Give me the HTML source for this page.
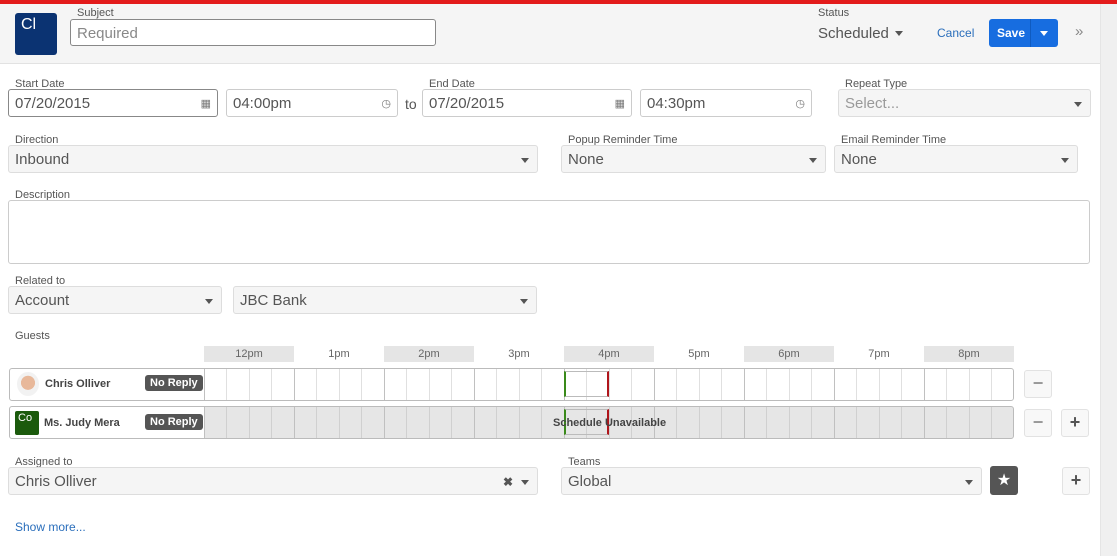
<!DOCTYPE html><html><head><style>
*{box-sizing:border-box}
body{margin:0;width:1117px;height:556px;overflow:hidden;background:#fff;font-family:"Liberation Sans",Arial,sans-serif;color:#555;position:relative}
.a{position:absolute}
.lbl{position:absolute;font-size:11px;color:#555;margin-top:1px}
.in{position:absolute;height:28px;border:1px solid #ccc;border-radius:3px;background:#fff;font-size:15px;color:#555;padding:6px 6px 0;line-height:16px}
.sel{position:absolute;height:28px;border:1px solid #ddd;border-radius:3px;background:#f5f5f5;font-size:15px;color:#555;padding:6px 6px 0;line-height:16px}
.car{position:absolute;right:8px;top:12px;width:0;height:0;border-left:4px solid transparent;border-right:4px solid transparent;border-top:5px solid #555}
.hr{position:absolute;top:346px;width:90px;height:16px;font-size:11px;text-align:center;line-height:16px;color:#666}
.btn{position:absolute;width:28px;height:28px;border:1px solid #e2e2e2;border-radius:3px;background:#f8f8f8;text-align:center;color:#999;font-size:18px;line-height:24px;font-weight:bold}
.nr{position:absolute;background:#555;color:#fff;font-size:11px;font-weight:bold;border-radius:3px;padding:2px 5px}
</style></head><body>
<div class="a" style="left:0;top:0;width:1117px;height:4px;background:#e31b1b"></div>
<div class="a" style="left:0;top:4px;width:1100px;height:60px;background:#f5f5f5;border-bottom:1px solid #e2e2e2"></div>
<div class="a" style="left:1100px;top:4px;width:17px;height:552px;background:#f0f0f0;border-left:1px solid #e5e5e5"></div>
<div class="a" style="left:15px;top:13px;width:42px;height:42px;background:#0b3372;border-radius:3px;color:#fff;font-size:16px;padding:3px 6px">Cl</div>
<div class="lbl" style="left:77px;top:6px">Subject</div>
<div class="in" style="left:70px;top:19px;width:366px;height:27px;border-color:#888;color:#888">Required</div>
<div class="lbl" style="left:818px;top:6px">Status</div>
<div class="a" style="left:818px;top:25px;font-size:15px;color:#555">Scheduled</div>
<div class="a" style="left:895px;top:31px;border-left:4px solid transparent;border-right:4px solid transparent;border-top:5px solid #555"></div>
<div class="a" style="left:937px;top:26px;font-size:12px;color:#2a6ebb">Cancel</div>
<div class="a" style="left:989px;top:19px;width:69px;height:28px;background:#176de0;border-radius:3px;color:#fff;font-size:12px;font-weight:bold;line-height:28px;padding-left:8px">Save</div>
<div class="a" style="left:1030px;top:19px;width:1px;height:28px;background:#0f5bc0"></div>
<div class="a" style="left:1040px;top:31px;border-left:4px solid transparent;border-right:4px solid transparent;border-top:5px solid #fff"></div>
<div class="a" style="left:1075px;top:23px;font-size:15px;color:#888">»</div>

<div class="lbl" style="left:15px;top:77px">Start Date</div>
<div class="in" style="left:8px;top:89px;width:210px;border-color:#888">07/20/2015<span class="a" style="right:6px;top:6px;font-size:11px;color:#777">▦</span></div>
<div class="in" style="left:226px;top:89px;width:172px">04:00pm<span class="a" style="right:6px;top:6px;font-size:11px;color:#777">◷</span></div>
<div class="a" style="left:405px;top:96px;font-size:14px">to</div>
<div class="lbl" style="left:429px;top:77px">End Date</div>
<div class="in" style="left:422px;top:89px;width:210px">07/20/2015<span class="a" style="right:6px;top:6px;font-size:11px;color:#777">▦</span></div>
<div class="in" style="left:640px;top:89px;width:172px">04:30pm<span class="a" style="right:6px;top:6px;font-size:11px;color:#777">◷</span></div>
<div class="lbl" style="left:845px;top:77px">Repeat Type</div>
<div class="sel" style="left:838px;top:89px;width:253px;color:#999">Select...<span class="car"></span></div>

<div class="lbl" style="left:15px;top:133px">Direction</div>
<div class="sel" style="left:8px;top:145px;width:530px">Inbound<span class="car"></span></div>
<div class="lbl" style="left:568px;top:133px">Popup Reminder Time</div>
<div class="sel" style="left:561px;top:145px;width:265px">None<span class="car"></span></div>
<div class="lbl" style="left:841px;top:133px">Email Reminder Time</div>
<div class="sel" style="left:834px;top:145px;width:244px">None<span class="car"></span></div>

<div class="lbl" style="left:15px;top:188px">Description</div>
<div class="in" style="left:8px;top:200px;width:1082px;height:64px"></div>

<div class="lbl" style="left:15px;top:274px">Related to</div>
<div class="sel" style="left:8px;top:286px;width:214px">Account<span class="car"></span></div>
<div class="sel" style="left:233px;top:286px;width:304px">JBC Bank<span class="car"></span></div>

<div class="lbl" style="left:15px;top:329px">Guests</div>
<div class="hr" style="left:204px;background:#e5e5e5">12pm</div>
<div class="hr" style="left:294px">1pm</div>
<div class="hr" style="left:384px;background:#e5e5e5">2pm</div>
<div class="hr" style="left:474px">3pm</div>
<div class="hr" style="left:564px;background:#e5e5e5">4pm</div>
<div class="hr" style="left:654px">5pm</div>
<div class="hr" style="left:744px;background:#e5e5e5">6pm</div>
<div class="hr" style="left:834px">7pm</div>
<div class="hr" style="left:924px;background:#e5e5e5">8pm</div>

<div class="a" style="left:9px;top:368px;width:1005px;height:33px;border:1px solid #bbb;border-radius:3px;background:#fff"></div>
<div class="a" style="left:204px;top:407px;width:809px;height:31px;background:#e6e6e6"></div>
<svg class="a" style="left:0;top:0" width="1117" height="556">
<g stroke-width="1">
<g stroke="#e0e0e0">
<path d="M226.5 369V400M249.5 369V400M271.5 369V400M316.5 369V400M339.5 369V400M361.5 369V400M406.5 369V400M429.5 369V400M451.5 369V400M496.5 369V400M519.5 369V400M541.5 369V400M586.5 369V400M609.5 369V400M631.5 369V400M676.5 369V400M699.5 369V400M721.5 369V400M766.5 369V400M789.5 369V400M811.5 369V400M856.5 369V400M879.5 369V400M901.5 369V400M946.5 369V400M969.5 369V400M991.5 369V400"/>
</g>
<g stroke="#d0d0d0">
<path d="M226.5 407V438M249.5 407V438M271.5 407V438M316.5 407V438M339.5 407V438M361.5 407V438M406.5 407V438M429.5 407V438M451.5 407V438M496.5 407V438M519.5 407V438M541.5 407V438M586.5 407V438M609.5 407V438M631.5 407V438M676.5 407V438M699.5 407V438M721.5 407V438M766.5 407V438M789.5 407V438M811.5 407V438M856.5 407V438M879.5 407V438M901.5 407V438M946.5 407V438M969.5 407V438M991.5 407V438"/>
</g>
<g stroke="#c0c0c0">
<path d="M204.5 369V400M294.5 369V400M384.5 369V400M474.5 369V400M564.5 369V400M654.5 369V400M744.5 369V400M834.5 369V400M924.5 369V400M204.5 407V438M294.5 407V438M384.5 407V438M474.5 407V438M564.5 407V438M654.5 407V438M744.5 407V438M834.5 407V438M924.5 407V438"/>
</g>
</g>
</svg>
<div class="a" style="left:17px;top:372px;width:22px;height:24px;border-radius:50%;background:radial-gradient(circle at 50% 45%,#e8b89a 0 40%,#f2f2f2 42%)"></div>
<div class="a" style="left:45px;top:378px;font-size:11px;font-weight:bold;color:#444">Chris Olliver</div>
<div class="nr" style="left:145px;top:375px">No Reply</div>
<div class="a" style="left:564px;top:371px;width:45px;height:26px;border:1px solid #bbb;border-left:2px solid #3a8a1a;border-right:2px solid #b0151b"></div>

<div class="a" style="left:9px;top:406px;width:1005px;height:33px;border:1px solid #bbb;border-radius:3px"></div>
<div class="a" style="left:15px;top:411px;width:24px;height:24px;border-radius:2px;background:#1b5a0c;color:#fff;font-size:11px;padding:1px 3px">Co</div>
<div class="a" style="left:44px;top:417px;font-size:11px;font-weight:bold;color:#444">Ms. Judy Mera</div>
<div class="nr" style="left:145px;top:414px">No Reply</div>
<div class="a" style="left:564px;top:409px;width:45px;height:26px;border:1px solid #bbb;border-left:2px solid #3a8a1a;border-right:2px solid #b0151b"></div>
<div class="a" style="left:553px;top:417px;font-size:11px;font-weight:bold;color:#444">Schedule Unavailable</div>

<div class="btn" style="left:1024px;top:370px">−</div>
<div class="btn" style="left:1024px;top:409px">−</div>
<div class="btn" style="left:1061px;top:409px;color:#555">+</div>

<div class="lbl" style="left:15px;top:455px">Assigned to</div>
<div class="sel" style="left:8px;top:467px;width:530px">Chris Olliver<span class="a" style="right:24px;top:6px;font-size:12px;font-weight:bold">✖</span><span class="car"></span></div>
<div class="lbl" style="left:568px;top:455px">Teams</div>
<div class="sel" style="left:561px;top:467px;width:421px">Global<span class="car"></span></div>
<div class="a" style="left:990px;top:466px;width:28px;height:29px;background:#555;border-radius:3px;color:#fff;text-align:center;line-height:29px;font-size:16px">★</div>
<div class="btn" style="left:1062px;top:467px;color:#555">+</div>

<div class="a" style="left:15px;top:520px;font-size:12px;color:#2a6ebb">Show more...</div>
</body></html>
